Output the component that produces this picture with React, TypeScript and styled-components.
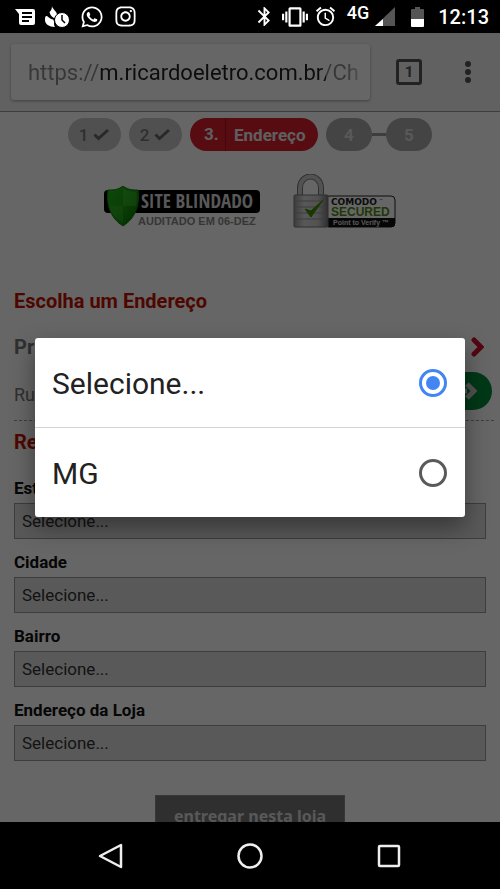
import React, { useState } from 'react';
import styled, { createGlobalStyle } from 'styled-components';
import { MdAlarm, MdBluetooth, MdVibration } from 'react-icons/md';
import { FaInstagram, FaWhatsapp } from 'react-icons/fa';

const GlobalStyle = createGlobalStyle`
  *, *::before, *::after { box-sizing: border-box; }
  body { margin: 0; background: #000; font-family: Roboto, "Liberation Sans", sans-serif; }
  button, input, select { font: inherit; }
`;

const Screen = styled.div`
  display: flex;
  flex-direction: column;
  height: 100vh;
  background: #000;
`;

/* Status bar */

const StatusBar = styled.header`
  display: flex;
  align-items: center;
  justify-content: space-between;
  flex: none;
  height: 33px;
  padding: 0 11px 0 15px;
  color: #fff;
`;

const StatusGroup = styled.div<{ $gap: number }>`
  display: flex;
  align-items: center;
  gap: ${(p) => p.$gap}px;
  svg { display: block; }
`;

const Network = styled.span`
  align-self: flex-start;
  margin-left: 4px;
  font-size: 18px;
  line-height: 18px;
  font-weight: 500;
`;

const Clock = styled.time`
  margin-left: 4px;
  font-size: 20px;
  line-height: 24px;
  font-weight: 500;
`;

/* Browser */

const Viewport = styled.div`
  position: relative;
  flex: 1;
  min-height: 0;
  overflow: hidden;
  background: #fff;
`;

const Toolbar = styled.div`
  display: flex;
  align-items: center;
  height: 79px;
  padding: 0 12px 0 11px;
  background: #f2f2f2;
  border-bottom: 1px solid #999;
`;

const Address = styled.input`
  flex: 1;
  min-width: 0;
  height: 56px;
  padding: 0 10px 0 17px;
  border: 0;
  border-radius: 3px;
  outline: 0;
  font-size: 22px;
  color: transparent;
  background:
    linear-gradient(90deg, #8a8a8a 88px, #222 88px, #222 315px, #8a8a8a 315px, #8a8a8a 335px, #ccc 348px) text,
    #fff;
  box-shadow: 0 1px 3px rgba(0, 0, 0, 0.35);
`;

const TabsButton = styled.button`
  width: 26px;
  height: 26px;
  margin: 0 37px 0 26px;
  padding: 0;
  border: 3px solid #555;
  border-radius: 3px;
  background: none;
  color: #555;
  font-size: 15px;
  line-height: 20px;
  font-weight: 700;
`;

const MenuButton = styled.button`
  display: flex;
  flex-direction: column;
  align-items: center;
  gap: 2px;
  width: 18px;
  margin-right: 11px;
  padding: 0;
  border: 0;
  background: none;
`;

const Dot = styled.span`
  width: 6px;
  height: 6px;
  border-radius: 50%;
  background: #555;
`;

/* Checkout steps */

const Steps = styled.ol`
  display: flex;
  justify-content: center;
  gap: 8px;
  margin: 0;
  padding: 6px 0 0;
  list-style: none;
`;

const Step = styled.li<{ $width: number; $tone: string; $color: string }>`
  display: flex;
  align-items: center;
  justify-content: center;
  gap: 5px;
  width: ${(p) => p.$width}px;
  height: 33px;
  border-radius: 17px;
  background: ${(p) => p.$tone};
  color: ${(p) => p.$color};
  font-size: 17px;
  font-weight: 700;
`;

const DoneStep = styled(Step)`
  font-weight: 500;
`;

const CurrentStep = styled(Step)`
  gap: 0;
  justify-content: flex-start;
`;

const StepNumber = styled.span`
  width: 36px;
  padding-left: 14px;
  line-height: 33px;
  border-right: 1px solid #a8121e;
`;

const StepName = styled.span`
  padding-left: 8px;
`;

const LinkedSteps = styled.li`
  display: flex;
  align-items: center;
`;

const Connector = styled.span`
  width: 14px;
  height: 3px;
  background: #999;
`;

const LinkedStep = styled(Step).attrs({ as: 'span' })``;

const Seals = styled.div`
  display: flex;
  align-items: flex-end;
  justify-content: center;
  gap: 32px;
  height: 78px;
  svg { display: block; }
`;

/* Address selection */

const Main = styled.main`
  padding: 59px 14px 0;
`;

const Title = styled.h2<{ $tight?: boolean }>`
  margin: ${(p) => (p.$tight ? '8px 0 23px' : '0')};
  font-size: 20px;
  line-height: 26px;
  font-weight: 700;
  color: #c41200;
`;

const AddressCard = styled.div`
  margin: 20px -8px 0 0;
  border-bottom: 1px dashed #999;
`;

const CardRow = styled.div`
  display: flex;
  align-items: center;
  justify-content: space-between;
  height: 26px;
  color: #777;
`;

const StreetRow = styled(CardRow)`
  align-items: flex-end;
  height: 60px;
  padding-bottom: 10px;
`;

const CardName = styled.strong`
  font-size: 20px;
`;

const Street = styled.span`
  font-size: 18px;
  line-height: 30px;
`;

const RowLink = styled.a`
  display: block;
  margin-right: 10px;
  svg { display: block; }
`;

const GoButton = styled.button`
  display: flex;
  align-items: center;
  justify-content: flex-end;
  width: 60px;
  height: 38px;
  margin-right: 2px;
  padding: 0 15px 0 0;
  border: 0;
  border-radius: 19px;
  background: #008c3a;
`;

const Field = styled.div`
  display: flex;
  flex-direction: column;
  gap: 5px;
  margin-bottom: 13px;
`;

const FieldLabel = styled.label`
  font-size: 17px;
  line-height: 20px;
  font-weight: 700;
  color: #111;
`;

const Select = styled.select`
  appearance: none;
  width: 100%;
  height: 36px;
  padding: 0 7px;
  border: 1px solid #999;
  border-radius: 0;
  background: #dedede;
  color: #333;
  font-size: 17px;
`;

const Submit = styled.button`
  display: block;
  min-width: 190px;
  height: 42px;
  margin: 34px auto 0;
  padding: 0 18px;
  border: 1px solid #8a8a8a;
  background: #777;
  color: #ddd;
  font-family: "Noto Sans", sans-serif;
  font-size: 16px;
  font-weight: 700;
  white-space: nowrap;
`;

/* Option picker */

const Backdrop = styled.div`
  position: absolute;
  inset: 0;
  display: flex;
  align-items: center;
  padding: 0 35px;
  background: rgba(0, 0, 0, 0.6);
`;

const Dialog = styled.div`
  width: 100%;
  border-radius: 3px;
  background: #fff;
  box-shadow: 0 10px 24px rgba(0, 0, 0, 0.4);
`;

const Option = styled.label`
  display: flex;
  align-items: center;
  justify-content: space-between;
  height: 89px;
  padding: 2px 18px 0 17px;
  font-size: 30px;
  color: #222;
  & + & { height: 90px; border-top: 1px solid #d4d4d4; }
`;

const Radio = styled.input`
  appearance: none;
  display: grid;
  place-items: center;
  width: 28px;
  height: 28px;
  margin: 0 0 2px;
  border: 3px solid #5a5a5a;
  border-radius: 50%;
  &:checked { border-color: #4285f4; }
  &:checked::before {
    content: '';
    width: 14px;
    height: 14px;
    border-radius: 50%;
    background: #4285f4;
  }
`;

/* Navigation bar */

const NavBar = styled.nav`
  display: flex;
  align-items: center;
  justify-content: center;
  gap: 99px;
  flex: none;
  height: 67px;
`;

const NavButton = styled.button`
  display: block;
  padding: 6px;
  border: 0;
  background: none;
  svg { display: block; }
`;

const MessageIcon = () => (
  <svg width="20" height="18" viewBox="0 0 20 18">
    <path fill="#fff" fillRule="evenodd" d="M0 1h18q2 0 2 2v12q0 2-2 2H6q-2 0-2-2V6zM7 4v2h10V4zm0 4v2h10V8zm0 4v2h7v-2z" />
  </svg>
);

const FlameClockIcon = () => (
  <svg width="25" height="22" viewBox="0 0 25 22">
    <path fill="#fff" d="M7 0c0 3 5 5 5 9-1 2-2 3-3 3C7 11 5 9 4.500 6 6 5 7 3 7 0z" />
    <path fill="#fff" d="M1 10c2 0 3 2 5 3 2 0 3 1 3 3 0 2 0 4 1 5C4 21 0 18 0 14c0-2 0-3 1-4z" />
    <circle cx="17" cy="14" r="7.500" fill="#fff" stroke="#000" />
    <path d="M17 9v5l3 3" fill="none" stroke="#000" strokeWidth="1.500" />
  </svg>
);

const SignalIcon = () => (
  <svg width="20" height="20" viewBox="0 0 20 20">
    <path fill="#555" d="M20 0v19H0z" />
    <path fill="#fff" d="M8 12v7H0z" />
  </svg>
);

const BatteryIcon = () => (
  <svg width="13" height="20" viewBox="0 0 13 20">
    <path fill="#555" d="M4 0h5v2h3q1 0 1 1v10H0V3q0-1 1-1h3z" />
    <path fill="#fff" d="M0 12h13v7q0 1-1 1H1q-1 0-1-1z" />
  </svg>
);

const Check = () => (
  <svg width="17" height="13" viewBox="0 0 17 13">
    <path d="M1.500 6.500l4 4L15 2" fill="none" stroke="#666" strokeWidth="3" />
  </svg>
);

const SiteBlindadoSeal = () => (
  <svg width="157" height="43" viewBox="0 0 157 43" role="img" aria-label="Site Blindado">
    <defs>
      <linearGradient id="shield" x1="0" y1="0" x2="1" y2="1">
        <stop offset="0" stopColor="#1fb51f" />
        <stop offset="0.5" stopColor="#1c9c10" />
        <stop offset="1" stopColor="#006c00" />
      </linearGradient>
    </defs>
    <rect x="0" y="4" width="156" height="23" rx="4" fill="#000" />
    <path d="M19 0c5 4 10 4 15 4 2 14-2 28-15 36C6 32 2 18 4 4c5 0 10 0 15-4z" fill="url(#shield)" stroke="#128012" />
    <path d="M19 2c4 3 9 4 13 4 1 5 1 9 0 14H19z" fill="#45c934" opacity="0.4" />
    <path d="M5 20h14v17C11 32 7 27 5 20z" fill="#45c934" opacity="0.3" />
    <text x="37" y="22" fill="#ddd" fontFamily="'Liberation Sans Narrow', 'Open Sans Condensed', 'Liberation Sans', sans-serif" fontWeight="700" fontSize="19">SITE BLINDADO</text>
    <text x="34" y="39" fill="#888" fontFamily="'Liberation Sans', sans-serif" fontWeight="700" fontSize="11">AUDITADO EM 06-DEZ</text>
  </svg>
);

const ComodoSeal = () => (
  <svg width="104" height="55" viewBox="0 0 104 55" role="img" aria-label="Comodo Secured">
    <defs>
      <linearGradient id="metal" x1="0" y1="0" x2="1" y2="0">
        <stop offset="0" stopColor="#999" />
        <stop offset="0.3" stopColor="#ddd" />
        <stop offset="0.7" stopColor="#ccc" />
        <stop offset="1" stopColor="#777" />
      </linearGradient>
    </defs>
    <path d="M7 24V14a10 11 0 0 1 21 0v10" fill="none" stroke="#777" strokeWidth="6" />
    <path d="M7 24V14a10 11 0 0 1 21 0v10" fill="none" stroke="#ccc" strokeWidth="4" />
    <rect x="32" y="22" width="70" height="31" rx="4" fill="#fff" stroke="#222" />
    <path d="M32 44h70v6q0 3-3 3H32z" fill="#111" />
    <rect x="1" y="21" width="34" height="32" rx="1" fill="url(#metal)" stroke="#777" />
    <path d="M3 27h30M3 33h30M3 39h30M3 45h30" stroke="#999" />
    <path d="M12 35l6 8 12-17-12 11z" fill="#3c8c00" stroke="#3c8c00" />
    <text x="38" y="31" fill="#222" fontFamily="'DejaVu Sans', sans-serif" fontWeight="700" fontSize="9">COMODO</text>
    <text x="86" y="28" fill="#222" fontFamily="'DejaVu Sans', sans-serif" fontSize="4">™</text>
    <text x="38" y="42" fill="#4f8a10" fontFamily="'Liberation Sans', sans-serif" fontWeight="700" fontSize="12">SECURED</text>
    <text x="40" y="51" fill="#ddd" fontFamily="'Liberation Sans', sans-serif" fontWeight="700" fontSize="7">Point to Verify ™</text>
  </svg>
);

const fields = [
  { id: 'estado', label: 'Estado', options: ['Selecione...', 'MG'] },
  { id: 'cidade', label: 'Cidade', options: ['Selecione...'] },
  { id: 'bairro', label: 'Bairro', options: ['Selecione...'] },
  { id: 'loja', label: 'Endereço da Loja', options: ['Selecione...'] },
];

export default function App() {
  const [state, setState] = useState('Selecione...');

  return (
    <Screen>
      <GlobalStyle />
      <StatusBar>
        <StatusGroup $gap={10}>
          <MessageIcon />
          <FlameClockIcon />
          <FaWhatsapp size={24} />
          <FaInstagram size={23} />
        </StatusGroup>
        <StatusGroup $gap={6}>
          <MdBluetooth size={23} />
          <MdVibration size={26} />
          <MdAlarm size={23} />
          <Network>4G</Network>
          <SignalIcon />
          <StatusGroup $gap={10}>
            <span />
            <BatteryIcon />
            <Clock>12:13</Clock>
          </StatusGroup>
        </StatusGroup>
      </StatusBar>

      <Viewport>
        <Toolbar>
          <Address type="text" aria-label="URL" defaultValue="https://m.ricardoeletro.com.br/Ch" />
          <TabsButton type="button">1</TabsButton>
          <MenuButton type="button" aria-label="Menu">
            <Dot /><Dot /><Dot />
          </MenuButton>
        </Toolbar>

        <Steps>
          <DoneStep $width={53} $tone="#c8c8c8" $color="#777">1<Check /></DoneStep>
          <DoneStep $width={53} $tone="#c8c8c8" $color="#777">2<Check /></DoneStep>
          <CurrentStep $width={128} $tone="#da1f2c" $color="#eee">
            <StepNumber>3.</StepNumber>
            <StepName>Endereço</StepName>
          </CurrentStep>
          <LinkedSteps>
            <LinkedStep $width={46} $tone="#aaa" $color="#ddd">4</LinkedStep>
            <Connector />
            <LinkedStep $width={46} $tone="#aaa" $color="#ddd">5</LinkedStep>
          </LinkedSteps>
        </Steps>

        <Seals>
          <SiteBlindadoSeal />
          <ComodoSeal />
        </Seals>

        <Main>
          <Title>Escolha um Endereço</Title>
          <AddressCard>
            <CardRow>
              <CardName>Principal</CardName>
              <RowLink href="#principal" aria-label="Principal">
                <svg width="13" height="20" viewBox="0 0 13 20">
                  <path d="M3 3l7 7-7 7" fill="none" stroke="#d01030" strokeWidth="5" strokeLinecap="round" />
                </svg>
              </RowLink>
            </CardRow>
            <StreetRow>
              <Street>Rua</Street>
              <GoButton type="button" aria-label="Continuar">
                <svg width="18" height="20" viewBox="0 0 18 20">
                  <path d="M8 3l7 7-7 7M0 10h8" fill="none" stroke="#ccc" strokeWidth="5" />
                </svg>
              </GoButton>
            </StreetRow>
          </AddressCard>
          <Title $tight>Retire na Loja</Title>
          {fields.map((field) => (
            <Field key={field.id}>
              <FieldLabel htmlFor={field.id}>{field.label}</FieldLabel>
              <Select id={field.id}>
                {field.options.map((option) => <option key={option}>{option}</option>)}
              </Select>
            </Field>
          ))}
          <Submit type="button">entregar nesta loja</Submit>
        </Main>

        <Backdrop>
          <Dialog role="dialog" aria-label="Estado">
            {fields[0].options.map((option) => (
              <Option key={option}>
                {option}
                <Radio type="radio" name="state" checked={state === option} onChange={() => setState(option)} />
              </Option>
            ))}
          </Dialog>
        </Backdrop>
      </Viewport>

      <NavBar>
        <NavButton type="button" aria-label="Voltar">
          <svg width="28" height="28" viewBox="0 0 28 28">
            <path d="M3 14L24 3v22z" fill="none" stroke="#eee" strokeWidth="2.500" strokeLinejoin="round" />
          </svg>
        </NavButton>
        <NavButton type="button" aria-label="Início">
          <svg width="28" height="28" viewBox="0 0 28 28">
            <circle cx="14" cy="14" r="11.500" fill="none" stroke="#eee" strokeWidth="2.500" />
          </svg>
        </NavButton>
        <NavButton type="button" aria-label="Recentes">
          <svg width="28" height="28" viewBox="0 0 28 28">
            <rect x="4" y="4" width="20" height="20" rx="1" fill="none" stroke="#eee" strokeWidth="2.500" />
          </svg>
        </NavButton>
      </NavBar>
    </Screen>
  );
}
